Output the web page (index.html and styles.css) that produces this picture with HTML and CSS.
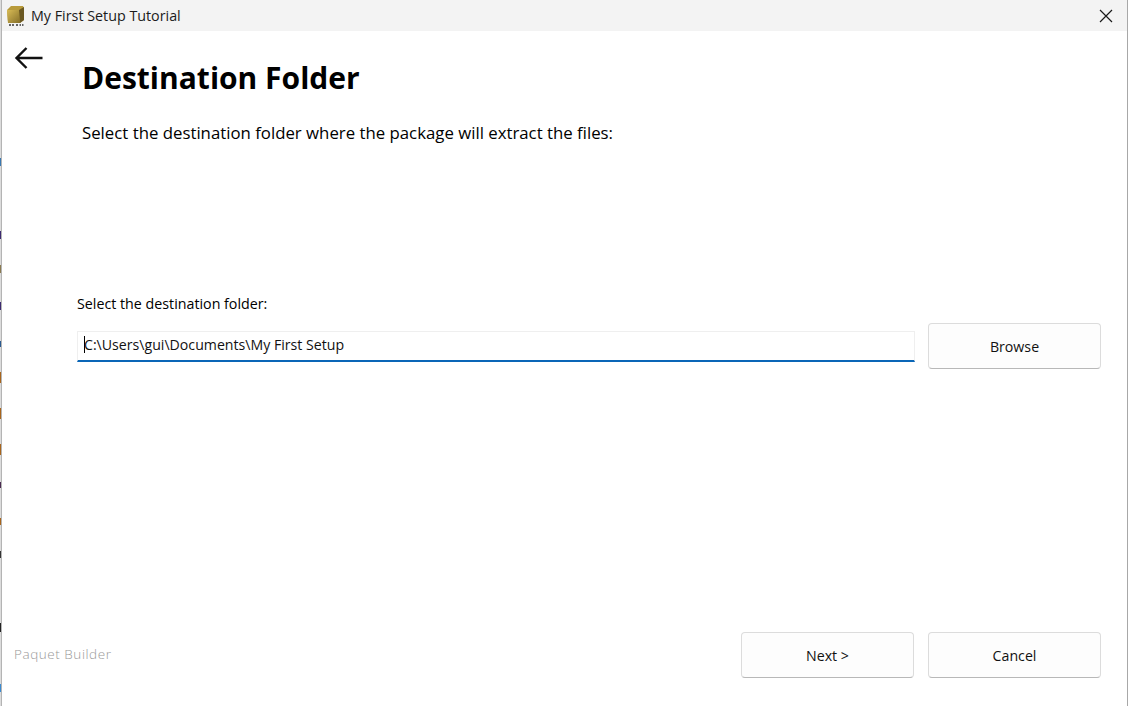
FILE: index.html
```html
<!DOCTYPE html>
<html lang="en">
<head>
<meta charset="utf-8">
<title>My First Setup Tutorial</title>
<link rel="stylesheet" href="styles.css">
</head>
<body>
<div class="desktop-edge"></div>
<div class="window">
  <header class="titlebar">
    <svg class="app-icon" viewBox="0 0 20 20" width="20" height="20" aria-hidden="true">
      <defs>
        <linearGradient id="boxFace" x1="0" y1="0" x2="1" y2="1">
          <stop offset="0" stop-color="#d8bb55"/>
          <stop offset="1" stop-color="#86702a"/>
        </linearGradient>
      </defs>
      <path d="M2 4 L6 0 L18 0 L19 2 L19 14 L15 17 L3 17 Z" fill="#b89a3a"/>
      <path d="M2 4 L14 4 L15 17 L3 17 Z" fill="url(#boxFace)"/>
      <path d="M14 4 L19 1 L19 14 L15 17 Z" fill="#6a5822"/>
      <path d="M4 19h2M7 19h2M11 19h2M14.500 19h1.500M17 19h1.500" stroke="#666" stroke-width="2" fill="none"/>
    </svg>
    <span class="window-title">My First Setup Tutorial</span>
    <button class="close" aria-label="Close">
      <svg viewBox="0 0 14 14" width="14" height="14" aria-hidden="true">
        <path d="M1 1 L13 13 M13 1 L1 13" stroke="#1a1a1a" stroke-width="1.200" fill="none"/>
      </svg>
    </button>
  </header>
  <main class="content">
    <div class="heading-row">
      <svg class="back" viewBox="0 0 30 24" width="30" height="24" aria-hidden="true">
        <path d="M28.500 12 H2.500 M12.500 2 L2.500 12 L12.500 22" stroke="#111" stroke-width="2.400" fill="none"/>
      </svg>
      <div class="heading-text">
        <h1>Destination Folder</h1>
        <p class="lead">Select the destination folder where the package will extract the files:</p>
      </div>
    </div>
    <section class="folder">
      <label class="folder-label" for="path">Select the destination folder:</label>
      <div class="folder-row">
        <div class="path-input" id="path"><span class="caret"></span>C:\Users\gui\Documents\My First Setup</div>
        <button class="btn btn-browse">Browse</button>
      </div>
    </section>
    <footer class="footer">
      <span class="brand">Paquet Builder</span>
      <div class="actions">
        <button class="btn">Next &gt;</button>
        <button class="btn">Cancel</button>
      </div>
    </footer>
  </main>
</div>
</body>
</html>
```
FILE: styles.css
```css
* { box-sizing: border-box; }
html, body { height: 100%; }
body {
  margin: 0;
  display: flex;
  background: #fff;
  color: #000;
  font-family: "Open Sans", "Noto Sans", "Liberation Sans", sans-serif;
  overflow: hidden;
}
.desktop-edge {
  width: 1px;
  flex: none;
  background:
    linear-gradient(#3a78b0, #3a78b0) 0 158px / 1px 8px no-repeat,
    linear-gradient(#3c2a70, #3c2a70) 0 231px / 1px 8px no-repeat,
    linear-gradient(#8a7a50, #8a7a50) 0 265px / 1px 8px no-repeat,
    linear-gradient(#3c2a70, #3c2a70) 0 302px / 1px 8px no-repeat,
    linear-gradient(#2a5a90, #2a5a90) 0 341px / 1px 6px no-repeat,
    linear-gradient(#a8651c, #a8651c) 0 372px / 1px 11px no-repeat,
    linear-gradient(#a8651c, #a8651c) 0 408px / 1px 11px no-repeat,
    linear-gradient(#a8651c, #a8651c) 0 444px / 1px 11px no-repeat,
    linear-gradient(#4a2a50, #4a2a50) 0 482px / 1px 6px no-repeat,
    linear-gradient(#a8651c, #a8651c) 0 518px / 1px 7px no-repeat,
    linear-gradient(#333, #333) 0 551px / 1px 7px no-repeat,
    linear-gradient(#222, #222) 0 623px / 1px 9px no-repeat,
    linear-gradient(#3a8ad0, #3a8ad0) 0 684px / 1px 8px no-repeat,
    #dcdcdc;
}
.window {
  flex: 1;
  min-width: 0;
  display: flex;
  flex-direction: column;
  border-left: 1px solid #b4b4b4;
  border-right: 1px solid #a8a8a8;
  background: #fff;
}
.titlebar {
  height: 31px;
  flex: none;
  display: flex;
  align-items: center;
  background: #f3f3f3;
  padding: 0 14px 0 3px;
}
.app-icon { flex: none; margin-right: 6px; }
.window-title { font-size: 14.300px; color: #1b1b1b; }
.close {
  margin-left: auto;
  width: 14px;
  height: 14px;
  padding: 0;
  border: 0;
  background: none;
  display: flex;
}
.content {
  flex: 1;
  display: flex;
  flex-direction: column;
  padding: 0 26px 28px 12px;
}
.heading-row { display: flex; height: 260px; flex: none; }
.back { flex: none; margin-top: 15px; }
.heading-text { margin-left: 38px; }
h1 {
  margin: 27px 0 0;
  font-size: 30px;
  line-height: 40px;
  font-weight: 700;
}
.lead { margin: 23px 0 0; font-size: 16.800px; line-height: 24px; }
.folder { margin-left: 63px; margin-top: 3px; }
.folder-label { display: block; font-size: 14.250px; line-height: 20px; }
.folder-row { display: flex; margin-top: 17px; align-items: flex-start; gap: 13px; }
.path-input {
  flex: 1;
  height: 31px;
  padding-left: 6px;
  border: 1px solid #efefef;
  border-bottom: 2px solid #0a66b7;
  font-size: 14.150px;
  line-height: 26px;
  white-space: nowrap;
  color: #111;
}
.caret {
  display: inline-block;
  width: 1px;
  height: 17px;
  margin-right: -1px;
  background: #000;
  vertical-align: -3px;
}
.btn {
  width: 173px;
  height: 46px;
  flex: none;
  border: 1px solid #dcdcdc;
  border-bottom-color: #b8b8b8;
  border-radius: 4px;
  background: #fdfdfd;
  font: inherit;
  font-size: 14.200px;
  color: #111;
  padding: 0;
}
.btn-browse { margin-top: -8px; }
.footer {
  margin-top: auto;
  display: flex;
  align-items: flex-start;
  justify-content: space-between;
}
.brand { font-size: 13.500px; color: #999; font-weight: 300; line-height: 20px; margin-top: 12px; letter-spacing: .55px; }
.actions { display: flex; gap: 14px; }
```
